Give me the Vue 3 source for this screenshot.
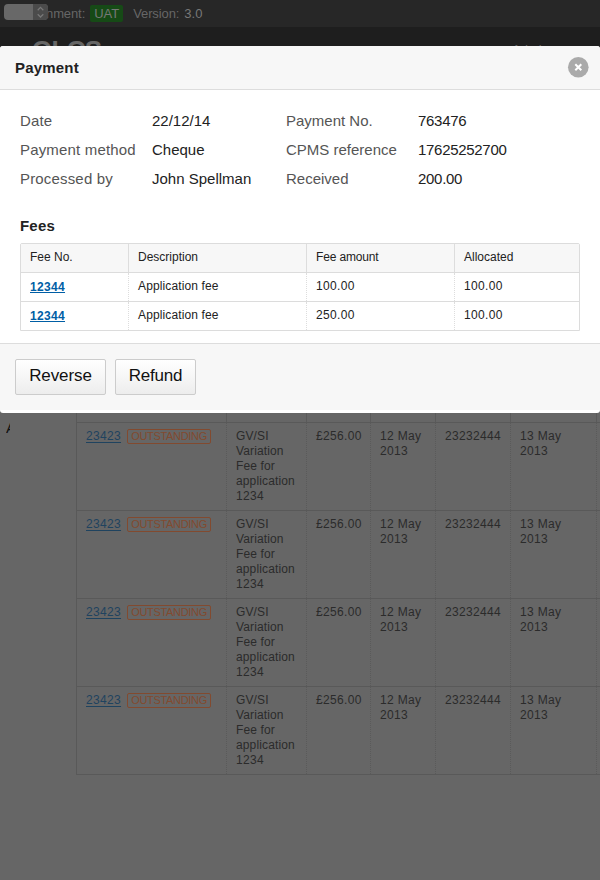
<script setup>
const details = [
  ['Date', '22/12/14', 'Payment No.', '763476'],
  ['Payment method', 'Cheque', 'CPMS reference', '17625252700'],
  ['Processed by', 'John Spellman', 'Received', '200.00'],
]
const fees = [
  { no: '12344', text: 'Application fee', amount: '100.00', allocated: '100.00' },
  { no: '12344', text: 'Application fee', amount: '250.00', allocated: '100.00' },
]
const rows = [1, 2, 3, 4]
const lines = ['GV/SI', 'Variation', 'Fee for', 'application', '1234']
</script>

<template>
  <div class="page">
    <div class="env">
      <span class="word">nment:</span><span class="tag">UAT</span><span class="word version">Version:</span><b>3.0</b>
      <div class="select">
        <svg width="15" height="17" viewBox="0 0 15 17"><path d="M4.7 6.2 7.5 3.4l2.8 2.8M4.7 10.2l2.8 2.8 2.8-2.8" /></svg>
      </div>
    </div>
    <header class="masthead">
      <span class="logo">OLCS</span>
      <span class="user">Admin</span>
    </header>
    <main class="content">
      <aside><span class="clip">A</span></aside>
      <div class="list">
        <div class="row head"><div v-for="n in 7" :key="n" class="cell"></div></div>
        <div v-for="r in rows" :key="r" class="row">
          <div class="cell"><a class="num">23423</a><span class="status">OUTSTANDING</span></div>
          <div class="cell"><div v-for="l in lines" :key="l" :class="{ num: l === '1234' }">{{ l }}</div></div>
          <div class="cell num">£256.00</div>
          <div class="cell num">12 May<br />2013</div>
          <div class="cell num">23232444</div>
          <div class="cell num">13 May<br />2013</div>
          <div class="cell"></div>
        </div>
      </div>
    </main>

    <section class="modal">
      <div class="title">
        <h2>Payment</h2>
        <svg class="close" width="22" height="22" viewBox="0 0 22 22"><circle cx="11.3" cy="11.3" r="10.3" /><path d="M8.3 8.3l6 6M14.3 8.3l-6 6" /></svg>
      </div>
      <div class="body">
        <dl class="details">
          <template v-for="d in details" :key="d[0]">
            <dt>{{ d[0] }}</dt><dd>{{ d[1] }}</dd><dt class="second">{{ d[2] }}</dt><dd class="tight">{{ d[3] }}</dd>
          </template>
        </dl>
        <h3>Fees</h3>
        <div class="fees">
          <div class="fee head"><div>Fee No.</div><div class="desc">Description</div><div class="amt">Fee amount</div><div>Allocated</div></div>
          <div v-for="(f, i) in fees" :key="i" class="fee">
            <div class="link"><a>{{ f.no }}</a></div><div>{{ f.text }}</div><div class="num">{{ f.amount }}</div><div class="num">{{ f.allocated }}</div>
          </div>
        </div>
      </div>
      <div class="actions"><button>Reverse</button><button class="refund">Refund</button></div>
    </section>
  </div>
</template>

<style>
body { margin: 0; background: #666; }
</style>

<style scoped>
* { box-sizing: border-box; }
.page { position: relative; width: 600px; height: 880px; overflow: hidden; background: #666; color: #222; font: 12px/15px "Liberation Sans", Arial, sans-serif; }
.env { position: relative; display: flex; height: 27px; padding-left: 46px; background: #272727; color: #666; font-size: 13px; line-height: 27px; }
.word { letter-spacing: -0.1px; }
.tag { width: 33px; height: 17px; margin: 5px 10px 0 5px; border-radius: 2px; background: #164a16; color: #777; line-height: 17px; text-align: center; }
.env b { margin-left: 5px; color: #777; font-weight: 400; }
.select { position: absolute; left: 4px; top: 4px; width: 44px; height: 16px; display: flex; justify-content: flex-end; overflow: hidden; border-radius: 4px; background: #686868; }
.select svg { background: #4b4b4b; fill: none; stroke: #777; stroke-width: 1.3; }
.masthead { display: flex; justify-content: space-between; height: 73px; padding: 8px 20px 0 32px; background: #1e1e1e; color: #666; }
.logo { font-size: 26px; line-height: 30px; font-weight: 700; letter-spacing: -0.7px; }
.user { padding-top: 7px; width: 68px; font-size: 13px; }
.content { display: flex; height: 780px; }
aside { flex: none; width: 76px; padding: 319px 0 0 6px; color: #111; font-size: 15px; line-height: 17px; }
.clip { display: block; width: 4px; overflow: hidden; }
.list { flex: none; width: 535px; height: 675px; border: 1px solid #595959; border-top: 0; color: #2b2b2b; }
.row { display: grid; grid-template-columns: 149px 80px 64px 65px 75px 86px 1fr; height: 88px; border-top: 1px solid #595959; }
.row.head { height: 322px; border-top: 0; }
.cell { padding: 6px 0 0 9px; border-left: 1px dotted #5a5a5a; letter-spacing: 0.13px; white-space: nowrap; }
.cell:first-child { border-left: 0; }
.head .cell { border-left-style: solid; }
.cell.num, .cell .num, .fee .num { letter-spacing: 0.33px; }
.cell a { color: #1f435f; text-decoration: underline; text-underline-offset: 2px; }
.status { display: inline-block; width: 84px; height: 15px; margin-left: 6px; border: 1px solid #824a2f; border-radius: 2px; color: #824a2f; font-size: 11px; line-height: 13px; letter-spacing: -0.32px; text-align: center; vertical-align: top; }

.modal { position: absolute; left: 0; top: 46px; width: 600px; height: 367px; overflow: hidden; border-radius: 3px; background: #fff; }
.title { display: flex; justify-content: space-between; height: 44px; padding: 0 11px 0 15px; border-bottom: 1px solid #ddd; background: #f7f7f7; }
h2, h3 { margin: 0; font-size: 15px; line-height: 18px; letter-spacing: 0.2px; }
h2 { padding-top: 13px; }
.close { margin-top: 10px; fill: #aaa; }
.close path { stroke: #fff; stroke-width: 2; }
.body { height: 253px; padding: 16px 20px 0; }
.details { display: grid; grid-template-columns: 132px 134px 132px 1fr; grid-auto-rows: 29px; height: 111px; margin: 0; font-size: 15px; line-height: 30px; }
dt { color: #555; letter-spacing: 0.17px; }
dt.second { letter-spacing: 0; }
dd { margin: 0; }
.tight { letter-spacing: -0.3px; }
.fees { margin-top: 8px; border: 1px solid #dcdcdc; border-radius: 2px 2px 0 0; }
.fee { display: grid; grid-template-columns: 107px 178px 148px 1fr; height: 29px; border-top: 1px solid #dcdcdc; line-height: 27px; letter-spacing: 0.13px; }
.fee div { padding-left: 9px; border-left: 1px dotted #ddd; }
.fee div:first-child { border-left: 0; }
.fee .link { padding-top: 1px; }
.fee.head { height: 28px; border-top: 0; background: #f7f7f7; }
.fee.head div { border-left-style: solid; letter-spacing: 0; }
.fee.head .amt { letter-spacing: -0.15px; }
.fee a { color: #005ea5; font-weight: 700; letter-spacing: 0.33px; text-decoration: underline; text-underline-offset: 1px; }
.actions { display: flex; gap: 9px; height: 67px; padding: 15px; border-top: 1px solid #ddd; background: #f7f7f7; }
button { width: 91px; height: 36px; padding: 0 0 3px; border: 1px solid #ccc; border-radius: 2px; background: linear-gradient(#fff, #ededed); color: #111; font: 17px/20px "Liberation Sans", Arial, sans-serif; letter-spacing: -0.1px; }
.refund { width: 81px; letter-spacing: -0.2px; }
</style>
